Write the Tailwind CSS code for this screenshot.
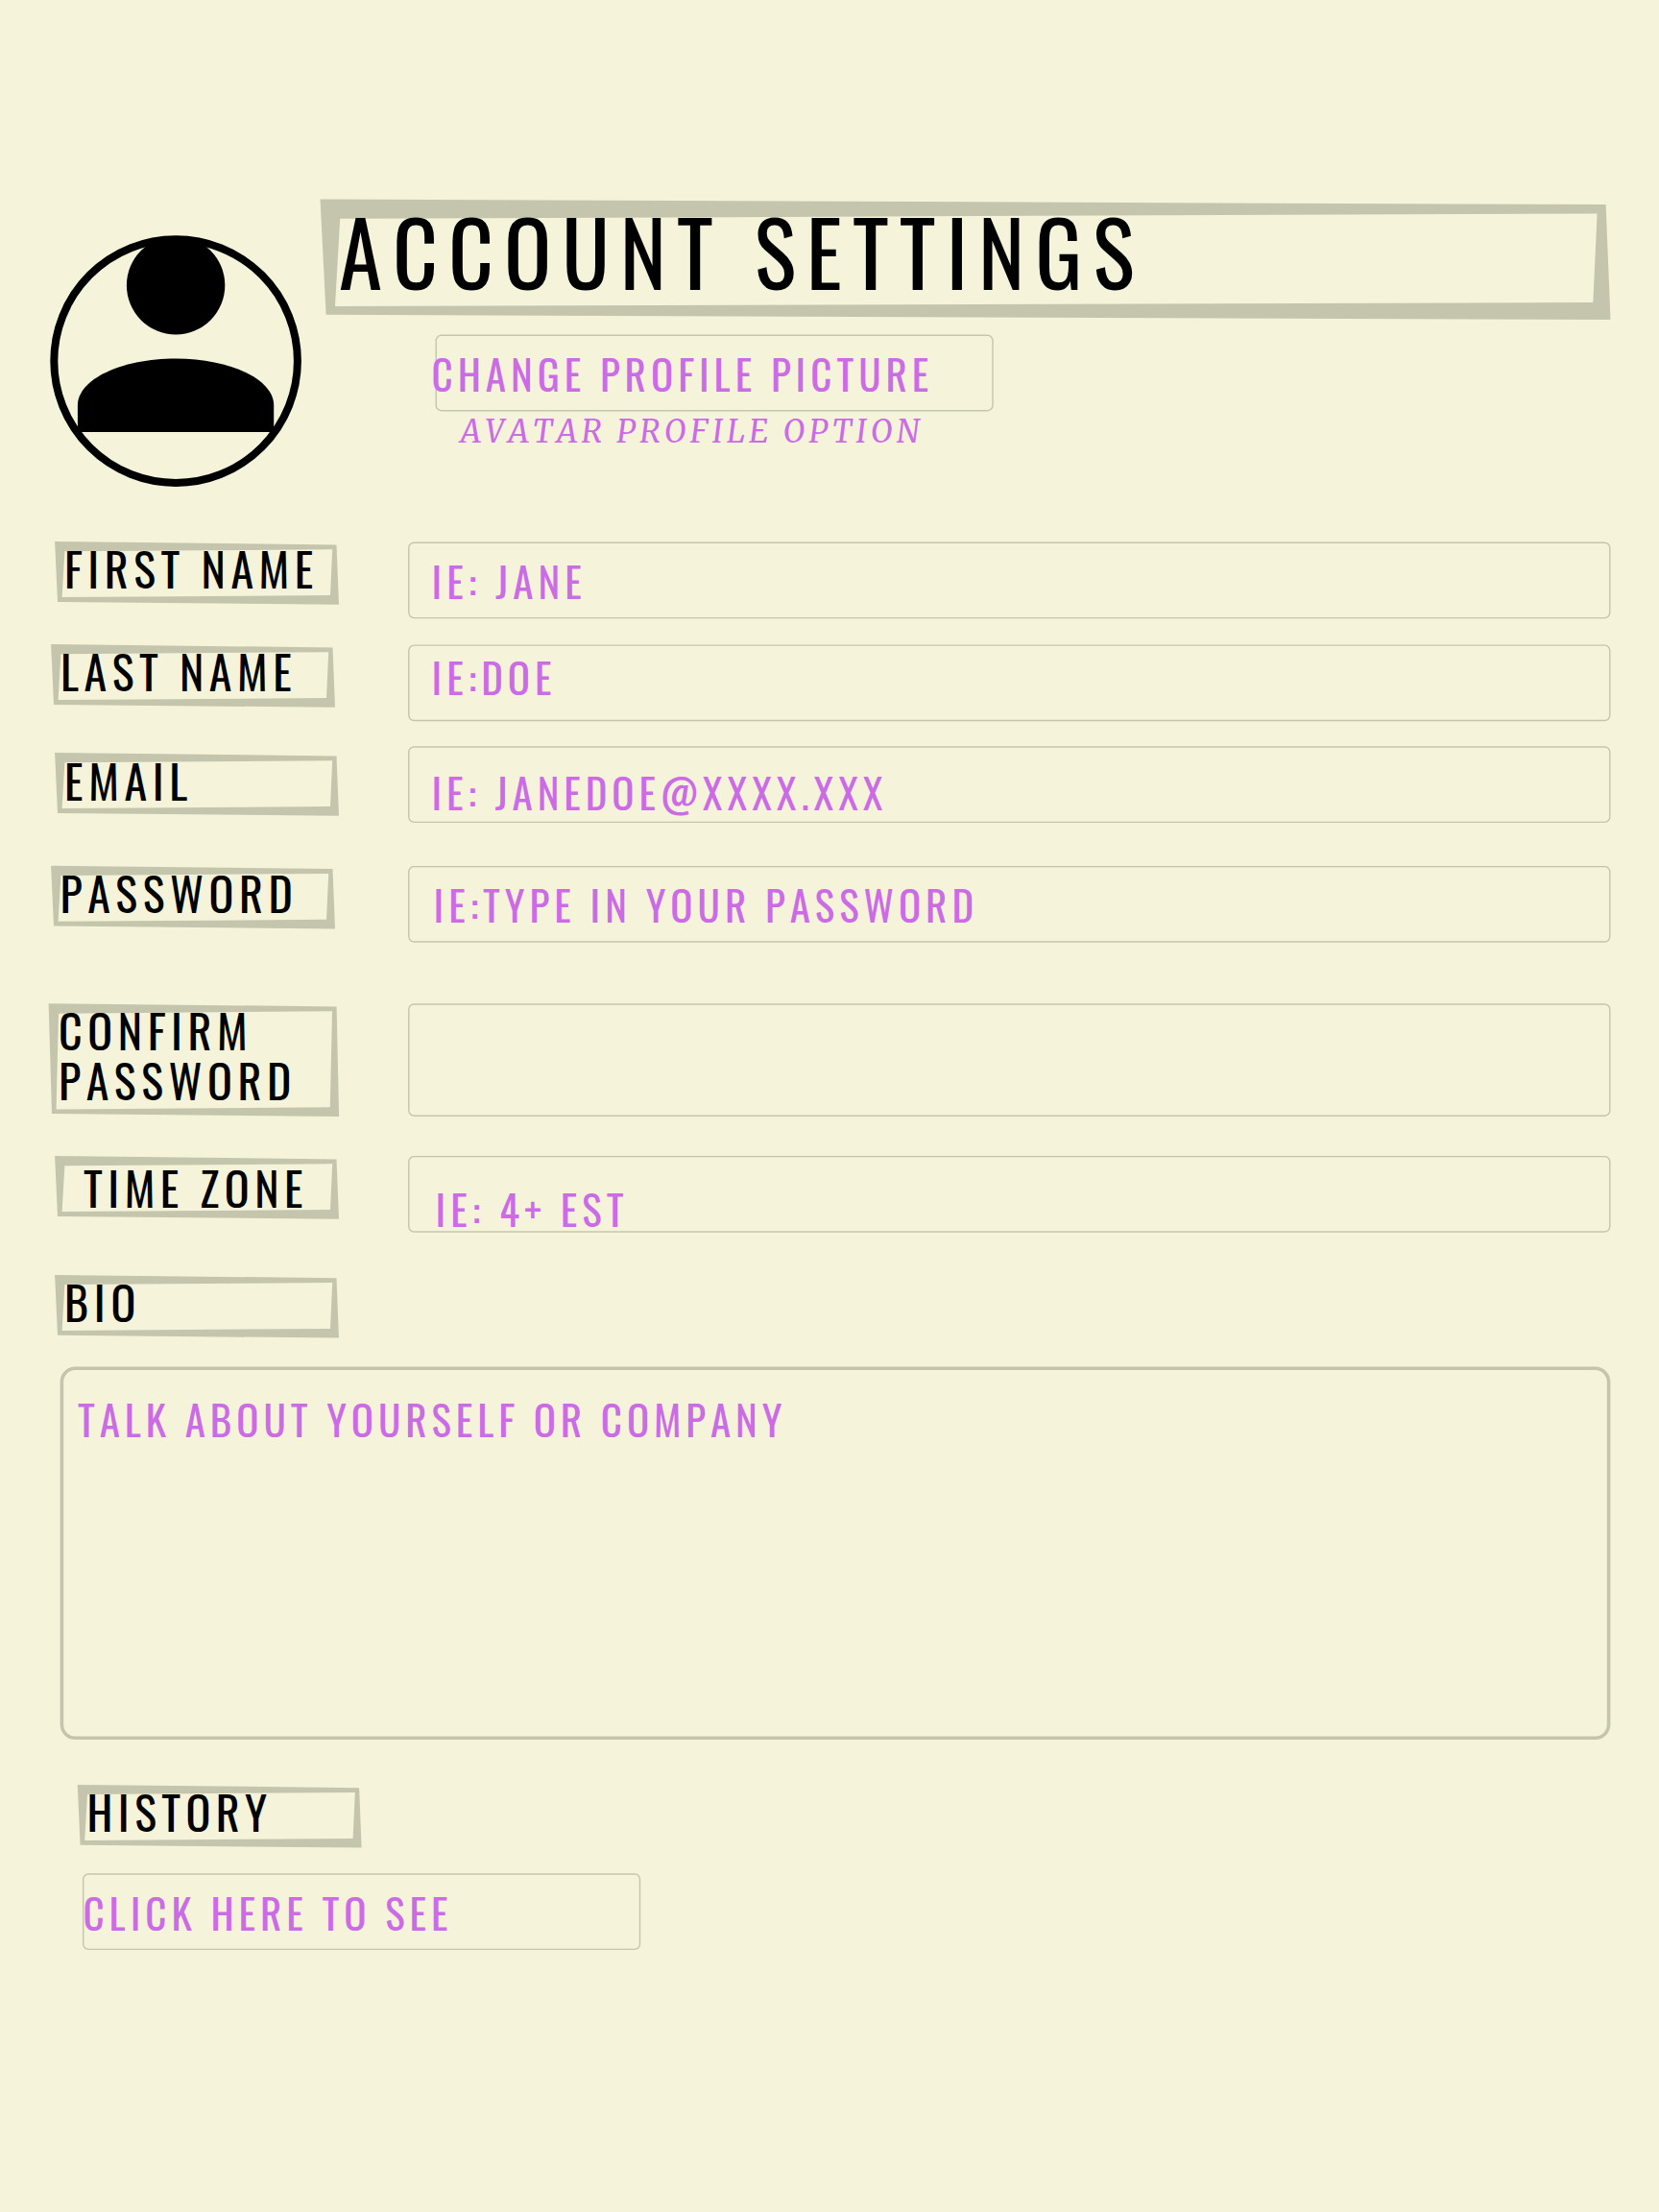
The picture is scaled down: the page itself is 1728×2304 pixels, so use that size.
<!DOCTYPE html>
<html lang="en">
<head>
<meta charset="utf-8">
<title>Account Settings</title>
<script src="https://cdn.jsdelivr.net/npm/@tailwindcss/browser@4"></script>
</head>
<body class="bg-[#f5f4db]">
<!-- Shared skewed label frame -->
<svg class="hidden">
  <symbol id="tag" viewBox="0 0 296 66" overflow="visible">
    <path fill="#c5c4ad" fill-rule="evenodd" d="M0.1 0.1L293.5 3.4L296 65.8L3 62.9ZM10.4 10.3L7.6 58.1L287 56.1L289.2 8.2Z"/>
  </symbol>
</svg>
<main class="flex h-[2304px] w-[1728px] flex-col overflow-hidden bg-[#f5f4db] pt-[207px] text-black [font-family:Oswald,'Open_Sans',sans-serif] [font-kerning:none] uppercase">

  <header class="flex h-[357px]">
    <svg class="mt-[37px] ml-[51px] h-[264px] w-[264px] shrink-0" viewBox="51 244 264 264">
      <circle cx="183.1" cy="376.1" r="126.8" fill="none" stroke="#000" stroke-width="8"/>
      <circle cx="183.1" cy="297.2" r="51.2"/>
      <path d="M80.9 450V422C80.9 395 126.7 373.4 183.1 373.4S285.2 395 285.2 422V450Z"/>
    </svg>
    <div class="ml-[18px] flex flex-col items-start">
      <div class="grid h-[126px] w-[1345px]">
        <svg class="col-start-1 row-start-1 h-[126px] w-[1345px] overflow-visible" viewBox="0 0 1345 126">
          <path fill="#c5c4ad" fill-rule="evenodd" d="M0.5 0.6L1339.6 6L1344.5 126L6.6 120.8ZM21.2 20.8L16 112L1326.3 108L1330.6 15.5Z"/>
        </svg>
        <h1 class="col-start-1 row-start-1 pt-2 pl-5 text-[91.4px] leading-[92px] tracking-[0.12em] whitespace-nowrap">Account Settings</h1>
      </div>
      <button class="mt-[15px] ml-[120px] grid h-[81px] w-[582px] text-left text-[#cb6ce6] uppercase">
        <svg class="col-start-1 row-start-1 h-full w-full"><rect x="1.2" y="1.3" width="579.8" height="78.4" rx="5.5" fill="none" stroke="#c5c4ad" stroke-width="1.4"/></svg>
        <span class="col-start-1 row-start-1 -ml-[3.5px] pt-[15px] text-[43.1px] leading-[52px] tracking-[0.1150em] whitespace-nowrap">Change profile picture</span>
      </button>
      <p class="ml-[146.5px] pt-px text-[32.7px] leading-10 tracking-[0.1248em] whitespace-nowrap text-[#cb6ce6] italic [font-family:Merriweather,'Noto_Serif',serif]">Avatar profile option</p>
    </div>
  </header>

  <form class="flex flex-col text-[48px] leading-[52px]">
    <div class="flex">
      <label class="ml-[57px] grid h-[66px] w-[296px]">
        <svg class="col-start-1 row-start-1 h-[66px] w-[296px] overflow-visible"><use href="#tag"/></svg>
        <span class="col-start-1 row-start-1 pt-0.5 pl-2.5 tracking-[0.116em] whitespace-nowrap">First name</span>
      </label>
      <div class="ml-[72px] grid h-[81px] w-[1253px]">
        <svg class="col-start-1 row-start-1 h-full w-full"><rect x="0.8" y="1.2" width="1251" height="78.4" rx="5.5" fill="none" stroke="#c5c4ad" stroke-width="1.4"/></svg>
        <span class="col-start-1 row-start-1 pt-[15px] pl-[24.5px] text-[43.1px] tracking-[0.1165em] text-[#cb6ce6]">IE: Jane</span>
      </div>
    </div>

    <div class="mt-[26px] flex">
      <label class="ml-[53px] grid h-[66px] w-[296px]">
        <svg class="col-start-1 row-start-1 h-[66px] w-[296px] overflow-visible"><use href="#tag"/></svg>
        <span class="col-start-1 row-start-1 pt-0.5 pl-2.5 tracking-[0.1155em] whitespace-nowrap">Last name</span>
      </label>
      <div class="ml-[76px] grid h-[81px] w-[1253px]">
        <svg class="col-start-1 row-start-1 h-full w-full"><rect x="0.8" y="1.1" width="1251" height="78.4" rx="5.5" fill="none" stroke="#c5c4ad" stroke-width="1.4"/></svg>
        <span class="col-start-1 row-start-1 pt-2 pl-[24.5px] text-[43.1px] tracking-[0.1155em] text-[#cb6ce6]">IE:Doe</span>
      </div>
    </div>

    <div class="mt-[25px] flex">
      <label class="mt-[7px] ml-[57px] grid h-[66px] w-[296px]">
        <svg class="col-start-1 row-start-1 h-[66px] w-[296px] overflow-visible"><use href="#tag"/></svg>
        <span class="col-start-1 row-start-1 pt-[3px] pl-2.5 tracking-[0.117em] whitespace-nowrap">Email</span>
      </label>
      <div class="ml-[72px] grid h-[81px] w-[1253px] grid-rows-[81px]">
        <svg class="col-start-1 row-start-1 h-full w-full"><rect x="0.8" y="1.0" width="1251" height="78.4" rx="5.5" fill="none" stroke="#c5c4ad" stroke-width="1.4"/></svg>
        <span class="col-start-1 row-start-1 pt-[22px] pl-[24.5px] text-[43.1px] tracking-[0.1137em] text-[#cb6ce6]">IE: janedoe@xxxx.xxx</span>
      </div>
    </div>

    <div class="mt-11 flex">
      <label class="ml-[53px] grid h-[66px] w-[296px]">
        <svg class="col-start-1 row-start-1 h-[66px] w-[296px] overflow-visible"><use href="#tag" y="-0.3"/></svg>
        <span class="col-start-1 row-start-1 pt-0.5 pl-[9.5px] tracking-[0.1165em] whitespace-nowrap">Password</span>
      </label>
      <div class="ml-[76px] grid h-[81px] w-[1253px]">
        <svg class="col-start-1 row-start-1 h-full w-full"><rect x="0.8" y="0.6" width="1251" height="78.4" rx="5.5" fill="none" stroke="#c5c4ad" stroke-width="1.4"/></svg>
        <span class="col-start-1 row-start-1 pt-3.5 pl-[26.5px] text-[43.1px] tracking-[0.1150em] text-[#cb6ce6]">IE:type in your password</span>
      </div>
    </div>

    <div class="mt-[62px] flex">
      <label class="ml-[50px] grid h-[118px] w-[303px]">
        <svg class="col-start-1 row-start-1 h-[118px] w-[303px] overflow-visible"><path fill="#c5c4ad" fill-rule="evenodd" d="M0.6 0.2L300.6 3.4L303.1 118L4 115ZM11 10.7L8.6 110.5L293.8 108.3L296 8.3Z"/></svg>
        <span class="col-start-1 row-start-1 pt-0.5 pl-[11px] tracking-[0.1165em]">Confirm Password</span>
      </label>
      <div class="ml-[72px] grid h-[119px] w-[1253px]">
        <svg class="h-full w-full"><rect x="0.8" y="1" width="1251" height="116.2" rx="5.5" fill="none" stroke="#c5c4ad" stroke-width="1.4"/></svg>
      </div>
    </div>

    <div class="mt-10 flex">
      <label class="ml-[57px] grid h-[66px] w-[296px]">
        <svg class="col-start-1 row-start-1 h-[66px] w-[296px] overflow-visible"><use href="#tag"/></svg>
        <span class="col-start-1 row-start-1 pt-[7px] pl-[30px] tracking-[0.114em] whitespace-nowrap">Time zone</span>
      </label>
      <div class="ml-[72px] grid h-[81px] w-[1253px] grid-rows-[81px]">
        <svg class="col-start-1 row-start-1 h-full w-full"><rect x="0.8" y="0.6" width="1251" height="78.4" rx="5.5" fill="none" stroke="#c5c4ad" stroke-width="1.4"/></svg>
        <span class="col-start-1 row-start-1 pt-[29px] pl-[28.5px] text-[43.1px] tracking-[0.1163em] text-[#cb6ce6]">IE: 4+ EST</span>
      </div>
    </div>

    <label class="mt-[43px] ml-[57px] grid h-[66px] w-[296px]">
      <svg class="col-start-1 row-start-1 h-[66px] w-[296px] overflow-visible"><use href="#tag" y="-0.2"/></svg>
      <span class="col-start-1 row-start-1 pt-0.5 pl-2.5 tracking-[0.118em]">Bio</span>
    </label>
    <div class="mt-[29px] ml-[62px] grid h-[390px] w-[1616px]">
      <svg class="col-start-1 row-start-1 h-full w-full"><rect x="2.4" y="2.3" width="1611.2" height="385" rx="14" fill="none" stroke="#c5c4ad" stroke-width="3.6"/></svg>
      <span class="col-start-1 row-start-1 pt-[29px] pl-[19px] text-[43.1px] tracking-[0.1135em] text-[#cb6ce6]">Talk about yourself or company</span>
    </div>
  </form>

  <section class="flex flex-col">
    <h2 class="mt-[46px] ml-[81px] grid h-[66px] w-[296px] text-[48px] leading-[52px]">
      <svg class="col-start-1 row-start-1 h-[66px] w-[296px] overflow-visible"><use href="#tag" x="-0.4" y="-0.2"/></svg>
      <span class="col-start-1 row-start-1 pt-0.5 pl-[9.5px] tracking-[0.1125em]">History</span>
    </h2>
    <button class="mt-[26px] ml-[86px] grid h-[81px] w-[582px] text-left text-[#cb6ce6] uppercase">
      <svg class="col-start-1 row-start-1 h-full w-full"><rect x="0.7" y="1" width="579.8" height="78.4" rx="5.5" fill="none" stroke="#c5c4ad" stroke-width="1.4"/></svg>
      <span class="col-start-1 row-start-1 pt-[15px] pl-[0.5px] text-[43.1px] leading-[52px] tracking-[0.1144em] whitespace-nowrap">Click here to see</span>
    </button>
  </section>
</main>
</body>
</html>
